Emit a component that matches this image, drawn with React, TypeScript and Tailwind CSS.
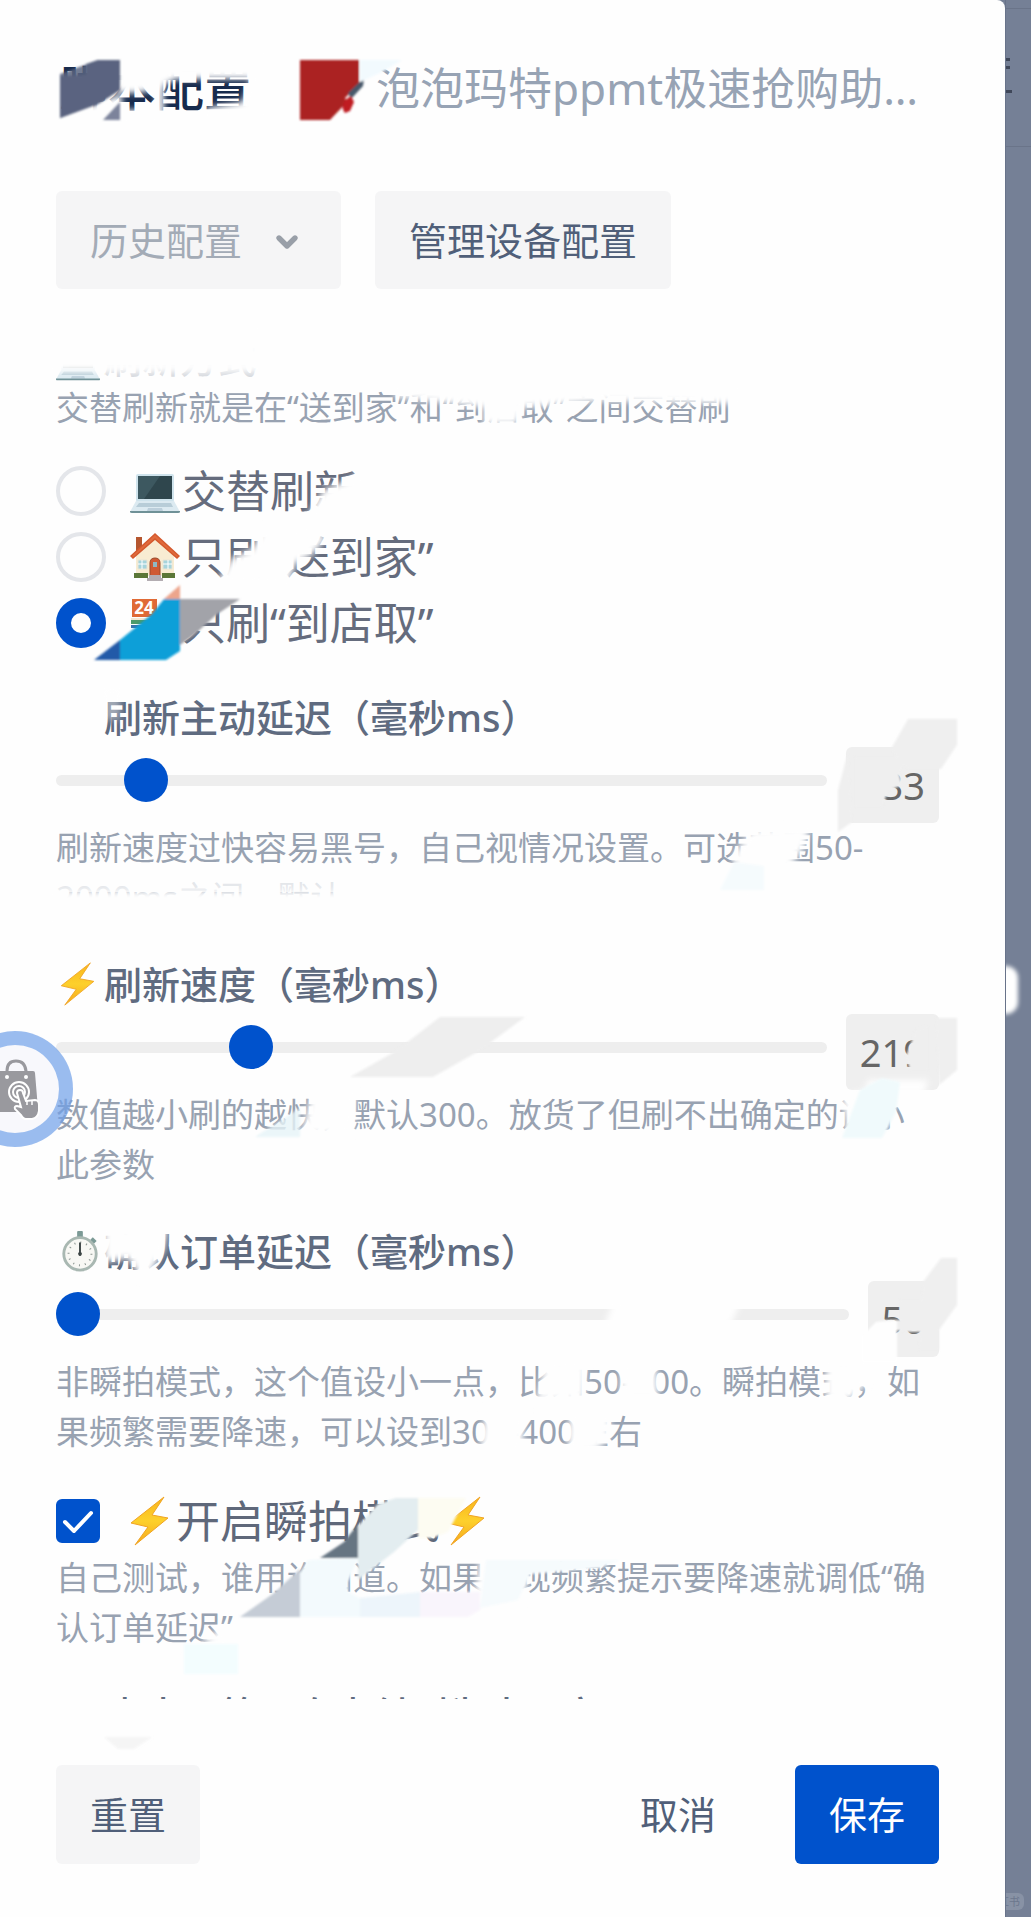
import React, { useState } from "react";
import { ChevronDown } from "lucide-react";

const Bolt = ({ className }: { className: string }) => (
  <svg viewBox="0 0 40 50" className={className} aria-hidden="true">
    <defs>
      <linearGradient id="bolt" x1="0" y1="0" x2="0" y2="1">
        <stop offset="0" stopColor="#f9b51c" />
        <stop offset="0.5" stopColor="#fdd02c" />
        <stop offset="1" stopColor="#f5a81c" />
      </linearGradient>
    </defs>
    <path
      d="M34 1 1 27l17 4L5 49l33-27-16-3z"
      fill="url(#bolt)"
      stroke="#f0a424"
      strokeWidth="1"
      strokeLinejoin="round"
    />
  </svg>
);

const Laptop = ({ className }: { className: string }) => (
  <svg viewBox="0 0 50 50" className={className} aria-hidden="true">
    <rect x="6" y="8" width="38" height="28" rx="2" fill="#cfe3ec" />
    <rect x="8" y="10" width="34" height="23" fill="#2f464d" />
    <path d="M8 10h22L14 33H8z" fill="#3d5860" />
    <path d="M6 35h38l6 11H0z" fill="#dceaf1" />
    <path d="M9 37h32l2 4H6z" fill="#b8cdd8" />
    <path d="M18 42h14l1 3H17z" fill="#bccfdb" />
    <path d="M0 45h50v1q0 1-2 1H2q-2 0-2-1z" fill="#6f9197" />
  </svg>
);

const House = ({ className }: { className: string }) => (
  <svg viewBox="0 0 50 50" className={className} aria-hidden="true">
    <path d="M6 5h6v16H6z" fill="#b5562f" />
    <path d="M25 5 6 22v22h38V22z" fill="#f8ecd2" />
    <path d="M25 2 1 24l2 2L25 7l22 19 2-2z" fill="#e06b3d" stroke="#d4592e" strokeWidth="1.5" />
    <path d="M20 44V31q0-5 5-5t5 5v13z" fill="#cf5a34" stroke="#9a4a2c" />
    <rect x="23" y="30" width="4" height="5" fill="#8fb8c4" />
    <path d="M8 28h9v9H8zM33 28h9v9h-9z" fill="#a6d4dc" stroke="#e9e4d4" />
    <path d="M12 28v9M8 32h9M38 28v9M33 32h9" stroke="#fff" />
    <path d="M4 41h14v5H4zM32 41h13v5H32z" fill="#5b7738" />
    <path d="M19 43h12v3H19zM17 46h16v3H17z" fill="#b3adb2" />
  </svg>
);

const Store = ({ className }: { className: string }) => (
  <svg viewBox="0 0 50 50" className={className} aria-hidden="true">
    <rect x="2" y="1" width="25" height="18" fill="#e06a36" />
    <text x="14" y="16" textAnchor="middle" fontSize="17" fontWeight="700" fill="#fff">24</text>
    <path d="M1 20h28v2H1z" fill="#f3e7d3" />
    <path d="M1 22h24v4H1z" fill="#4c9a6b" />
    <path d="M1 27h14v3H1z" fill="#3b74ad" />
  </svg>
);

const Stopwatch = ({ className }: { className: string }) => (
  <svg viewBox="0 0 40 44" className={className} aria-hidden="true">
    <rect x="17" y="1" width="6" height="7" rx="1" fill="#7c9a96" />
    <path d="m32 9 4 4" stroke="#7c9a96" strokeWidth="4" />
    <circle cx="20" cy="25" r="17" fill="#f8f8f4" stroke="#a9b8b2" strokeWidth="3" />
    <circle cx="20" cy="25" r="12" fill="none" stroke="#8a9490" strokeWidth="2" strokeDasharray="1 5.28" />
    <path d="M20 13v14" stroke="#3c4444" strokeWidth="2" />
    <circle cx="20" cy="25" r="2" fill="#3c4444" />
  </svg>
);

const FloatingBag = () => (
  <button
    aria-label="悬浮助手"
    className="absolute -left-[43px] top-[1031px] z-10 size-[116px] rounded-full border-[14px] border-[#6f9fe8]/70 bg-[#f8f8fc] bg-clip-padding"
  >
    <svg viewBox="0 0 56 64" className="absolute left-[20px] top-[12px] h-16 w-14" aria-hidden="true">
      <path d="M16 17v-3q0-10 9-10t10 10v3" fill="none" stroke="#99999e" strokeWidth="3" />
      <path d="M4 14h38q2 0 2 2l3 36q0 3-3 3H2z" fill="#99999e" />
      <circle cx="16" cy="20" r="2" fill="#fff" />
      <circle cx="35" cy="20" r="2" fill="#fff" />
      <circle cx="28" cy="35" r="10" fill="none" stroke="#fff" strokeWidth="2" />
      <circle cx="28" cy="35" r="6" fill="none" stroke="#fff" strokeWidth="2" />
      <path
        d="M26 36q0-3 3-3t3 3l3 8 9-1q4 0 4 5v6q-1 7-7 8h-6q-3 0-5-4l-6-6q-1-3 2-3l4 1z"
        fill="#99999e"
        stroke="#fff"
        strokeWidth="2"
      />
      <path d="M36 43v5M41 43v5" stroke="#fff" strokeWidth="1.5" />
    </svg>
  </button>
);

type DelayProps = {
  id: string;
  icon: React.ReactNode;
  title: string;
  min: number;
  max: number;
  initial: number;
  children: React.ReactNode;
};

const DelaySetting = ({ id, icon, title, min, max, initial, children }: DelayProps) => {
  const [value, setValue] = useState(initial);
  return (
    <section className="mt-9">
      <label htmlFor={id} className="flex h-[50px] items-center text-[38px] leading-[50px] font-medium text-[#5f6b80]">
        <span className="flex w-12 shrink-0 pl-1">{icon}</span>
        {title}
      </label>
      <div className="mt-[5px] flex items-start gap-[19px]">
        <input
          id={id}
          type="range"
          min={min}
          max={max}
          value={value}
          onChange={(e) => setValue(Number(e.target.value))}
          className="h-[66px] min-w-0 flex-1 appearance-none bg-transparent [&::-webkit-slider-runnable-track]:h-[11px] [&::-webkit-slider-runnable-track]:rounded-full [&::-webkit-slider-runnable-track]:bg-[#eeeeee] [&::-webkit-slider-thumb]:-mt-[17px] [&::-webkit-slider-thumb]:size-11 [&::-webkit-slider-thumb]:appearance-none [&::-webkit-slider-thumb]:rounded-full [&::-webkit-slider-thumb]:bg-[#0052cc]"
        />
        <output htmlFor={id} className="h-[76px] rounded-md bg-[#efefef] px-[14px] text-[38px] leading-[76px] text-[#666666]">
          {value}
        </output>
      </div>
      <p className="min-h-[100px] pr-1 text-[33px] leading-[50px] text-[#98a2b1]">{children}</p>
    </section>
  );
};

const modes = [
  { id: "both", icon: <Laptop className="size-[50px]" />, text: "交替刷新" },
  { id: "home", icon: <House className="size-[50px]" />, text: "只刷“送到家”" },
  { id: "store", icon: <Store className="size-[50px]" />, text: "只刷“到店取”" },
];

// Soft patches lying over the form
const Smudges = () => (
  <svg
    viewBox="0 0 1031 1917"
    className="pointer-events-none absolute left-0 top-0 h-[1917px] w-[1031px]"
    aria-hidden="true"
  >
    <defs>
      <filter id="soft" x="-20%" y="-20%" width="140%" height="140%">
        <feGaussianBlur stdDeviation="3" />
      </filter>
      <filter id="edge" x="-10%" y="-10%" width="120%" height="120%">
        <feGaussianBlur stdDeviation="1" />
      </filter>
    </defs>

    <g fill="#fefefe" filter="url(#soft)">
      <path d="M116 50h150v29h-90l-18 10-20 4h-22z" />
      <path d="M120 110h40v16h-40zM156 76h8v40h-8z" />
      <path d="M60 116l61-22 4 30H60z" />
      <path d="M252 78h14v40h-60v-10l36-6z" />
      <path d="M50 325h210v47H50z" />
      <path d="M395 385h345v19l-140-3-100 8-105-12z" />
      <path d="M484 402h42l-10 22h-32z" />
      <path d="m305 520 18-30 25-10 22-14v54z" />
      <path d="m216 584 16-26 20-9 12-22h36l28 10-16 18-16 8-8 22z" />
      <path d="m752 830 58-4-5 20-13 18v10h-58v-20z" />
      <path d="M50 891h700v34H50z" />
      <path d="M312 1092h44l-4 42h-50z" />
      <path d="m842 1096 40-10 8 20-6 28h-36z" />
      <path d="M868 1080h60l-4 14h-60z" />
      <path d="M104 1228h64l-4 22-14 24-8 6-14-22-24 4z" />
      <path d="m614 1300h128l-12 26H604z" />
      <path d="m546 1360 40-2-2 42h-48z" />
      <path d="m622 1360h34l2 40h-38z" />
      <path d="m826 1360h40v24l-8 8-10 8h-22z" />
      <path d="m486 1408h40l-4 44h-42z" />
      <path d="m570 1408h42l-4 32-14 12h-26z" />
      <path d="m480 1558h50l-6 44h-50z" />
      <path d="m206 1640 20-16 6 36h-46z" />
    </g>
    <path d="M105 366h150v18H105zM50 872h400v20H50z" fill="#fefefe" opacity="0.75" />
    <path d="M104 690h16v30h-16z" fill="#fefefe" opacity="0.4" filter="url(#soft)" />

    <g filter="url(#edge)">
      <path d="M60 76 86 75V64l12-4h22v30l-22 14-38 14z" fill="#5b6480" />
      <path d="M60 84v-10l38-14h22v30l-22 14-38 14z" fill="#5b6480" opacity="0.85" />
      <path d="M103 120l17-18v18z" fill="#7c839b" />
      <path d="M300 60h59v24l-14 14 2 4-17 18h-30z" fill="#ab2320" />
      <path d="m364 78-16 15 3 6 12-13z" fill="#46586a" />
      <path d="m345 100 6-4 3 6-4 9-5 2q-5-6 0-13z" fill="#c01f22" />
      <path d="M360 60h42l-20 12-22 10z" fill="#f2fafe" />

      <path d="m180 585-16 14h16z" fill="#eda58c" />
      <path d="m94 660 26-20v20z" fill="#245aa8" />
      <path d="m120 640 32-26 12-15h16v52l-14 9h-46z" fill="#0b9fd8" />
      <path d="M180 599h60l-24 16-22 20-14 10z" fill="#a2a3a9" />

      <path d="M908 719h49v26l-16 24h-34l-16-20z" fill="#efefef" />
      <path d="m848 752-10 38v42l14-10z" fill="#efefef" />
      <path d="M855 757h52l-8 16 3 12-14 6-6 16h-27z" fill="#efefef" />

      <path d="m350 1077 46-26 44-34h85l-46 34-46 26z" fill="#eeeeee" />
      <path d="M936 1018h21v52l-18 15z" fill="#efefef" />
      <path d="m916 1030 12-4v44h-18l-4-14z" fill="#efefef" />

      <path d="m923 1282 18-24h16v47l-18 25v20h-20z" fill="#efefef" />
      <path d="M900 1300h36v32h-36zM880 1320h24v12l-16-4z" fill="#efefef" />
      <path d="m862 1336 14-14 21-2v42h-35z" fill="#fefefe" />

      <path d="m720 890 14-28 30 4v24z" fill="#f5fbfd" />
      <path d="m255 1137 45-29v29z" fill="#e6f4f8" opacity="0.8" />
      <path d="m842 1138 18-48 22-12 18 4-4 30-14 26z" fill="#f0fafc" />

      <path d="m320 1558 24-16 14-18v34z" fill="#667482" />
      <path d="m358 1526 20-22 18-6h22v32l-24 22-36 28z" fill="#e3edf0" />
      <path d="M418 1498h48l-18 34-16 6h-14z" fill="#fdfcf2" />
      <path d="m240 1617 34-24 26-24v48z" fill="#c5ccd6" />
      <path d="m308 1560 50-2-10 24v10l12 6v19h-60v-44z" fill="#f3fafd" />
      <path d="M360 1598l60-6v25h-60z" fill="#edf5fb" />
      <path d="M420 1592h60v18l-12 7h-48z" fill="#f9f5fc" />
      <path d="m486 1560h134l-20 8-70 6-12 26-38 8z" fill="#f6fbfd" />
      <path d="M184 1644h54v30h-54z" fill="#f3fdfe" />
      <path d="m104 1737h48l-18 12h-16z" fill="#f5f5f5" />
    </g>
  </svg>
);

const App = () => {
  const [mode, setMode] = useState("store");
  const [snap, setSnap] = useState(true);

  return (
    <div className="relative flex min-h-screen overflow-hidden bg-[#758096] font-['Noto_Sans','Noto_Sans_CJK_SC',sans-serif]">
      <main className="flex min-w-0 flex-1 flex-col rounded-tr-lg bg-[#fefefe] pr-[66px] pl-14">
        <header className="mt-14 flex h-16 items-center">
          <h1 className="shrink-0 pl-1 text-5xl leading-[64px] font-medium text-[#172b4d]">脚本配置</h1>
          <h2 className="ml-[124px] truncate text-[44px] leading-[64px] text-[#97a3b4]">泡泡玛特ppmt极速抢购助手脚本</h2>
        </header>

        <div className="mt-[71px] flex gap-[34px]">
          <div className="relative">
            <select
              aria-label="历史配置"
              className="h-[98px] w-[285px] appearance-none rounded-md bg-[#f5f5f6] px-[34px] text-[38px] text-[#a3abb6]"
            >
              <option>历史配置</option>
            </select>
            <ChevronDown className="pointer-events-none absolute top-[35px] right-[38px] size-8 text-[#999fa8]" strokeWidth={4} />
          </div>
          <button className="h-[98px] rounded-md bg-[#f5f5f6] px-[34px] text-[38px] text-[#505f79]">管理设备配置</button>
        </div>

        <fieldset className="mt-11">
          <legend className="flex h-[50px] items-end text-[38px] leading-[50px] font-medium text-[#5f6b80]">
            <Laptop className="mr-1 size-11" />
            刷新方式
          </legend>
          <p className="text-[33px] leading-[50px] text-[#98a2b1]">交替刷新就是在“送到家”和“到店取”之间交替刷</p>
          <div className="mt-[25px]">
            {modes.map((m) => (
              <label key={m.id} className="flex h-[66px] items-center text-[44px] leading-[66px] text-[#656c7d]">
                <input
                  type="radio"
                  name="mode"
                  checked={mode === m.id}
                  onChange={() => setMode(m.id)}
                  className="mr-6 size-[50px] shrink-0 appearance-none rounded-full border-4 border-[#e4e6ea] checked:border-[15px] checked:border-[#0052cc]"
                />
                <span className="mr-0.5">{m.icon}</span>
                {m.text}
              </label>
            ))}
          </div>
        </fieldset>

        <DelaySetting id="refresh-delay" icon={null} title="刷新主动延迟（毫秒ms）" min={50} max={2000} initial={233}>
          刷新速度过快容易黑号，自己视情况设置。可选范围50-2000ms之间，默认
        </DelaySetting>
        <DelaySetting
          id="refresh-speed"
          icon={<Bolt className="h-11 w-9" />}
          title="刷新速度（毫秒ms）"
          min={50}
          max={760}
          initial={219}
        >
          数值越小刷的越快，默认300。放货了但刷不出确定的调小此参数
        </DelaySetting>
        <DelaySetting
          id="order-delay"
          icon={<Stopwatch className="h-[42px] w-10" />}
          title="确认订单延迟（毫秒ms）"
          min={50}
          max={2000}
          initial={50}
        >
          非瞬拍模式，这个值设小一点，比如50-200。瞬拍模式，如果频繁需要降速，可以设到300-400左右
        </DelaySetting>

        <section className="mt-8">
          <label className="flex h-16 items-center text-[44px] leading-[64px] text-[#5f687a]">
            <span className="relative mr-[30px] flex size-11">
              <input
                type="checkbox"
                checked={snap}
                onChange={(e) => setSnap(e.target.checked)}
                className="peer size-11 appearance-none rounded-md border-4 border-[#e4e6ea] checked:border-[#0052cc] checked:bg-[#0052cc]"
              />
              <svg viewBox="0 0 44 44" className="pointer-events-none absolute inset-0 hidden peer-checked:block" aria-hidden="true">
                <path d="m9 23 9 9 17-18" fill="none" stroke="#fff" strokeWidth="4" strokeLinecap="round" strokeLinejoin="round" />
              </svg>
            </span>
            <Bolt className="mr-1.5 h-[50px] w-10" />
            开启瞬拍模式
            <Bolt className="ml-1.5 h-[50px] w-10" />
          </label>
          <p className="text-[33px] leading-[50px] text-[#98a2b1]">
            自己测试，谁用谁知道。如果出现频繁提示要降速就调低“确认订单延迟”
          </p>
        </section>

        {/* next setting, cut off by the scroll edge */}
        <div className="mt-9 h-[10px] overflow-hidden text-[38px] leading-[50px] font-medium text-[#5f6b80]">
          <span className="pl-[50px]">点击下第四次支付到为止，定</span>
        </div>

        <footer className="mt-[66px] mb-[52px] flex items-center text-[38px] text-[#505f79]">
          <button className="h-[99px] rounded-md bg-[#f5f5f6] px-[34px]">重置</button>
          <button className="mr-[45px] ml-auto h-[99px] px-[34px]">取消</button>
          <button className="h-[99px] rounded-md bg-[#0052cc] px-[34px] text-white">保存</button>
        </footer>
      </main>

      <aside className="relative w-[26px] shrink-0 overflow-hidden border-l border-[#68738a]">
        <div className="mt-2 h-[139px] border-y border-[#6a7489]" />
        <div className="absolute top-[58px] left-0 h-[3px] w-1 bg-[#3f4759]" />
        <div className="absolute top-[66px] left-0 h-[3px] w-1 bg-[#3f4759]" />
        <div className="absolute top-[90px] left-0 h-[3px] w-[6px] bg-[#3f4759]" />
        <div className="absolute top-[966px] -left-3 h-12 w-6 rounded-full bg-white blur-[2px]" />
        <div className="absolute bottom-[7px] -left-[30px] h-[17px] w-12 rounded-md bg-[#8892a5] pr-1 text-right text-[11px] leading-[17px] text-[#6c778d]">
          小红书
        </div>
      </aside>

      <Smudges />
      <FloatingBag />
    </div>
  );
};

export default App;
